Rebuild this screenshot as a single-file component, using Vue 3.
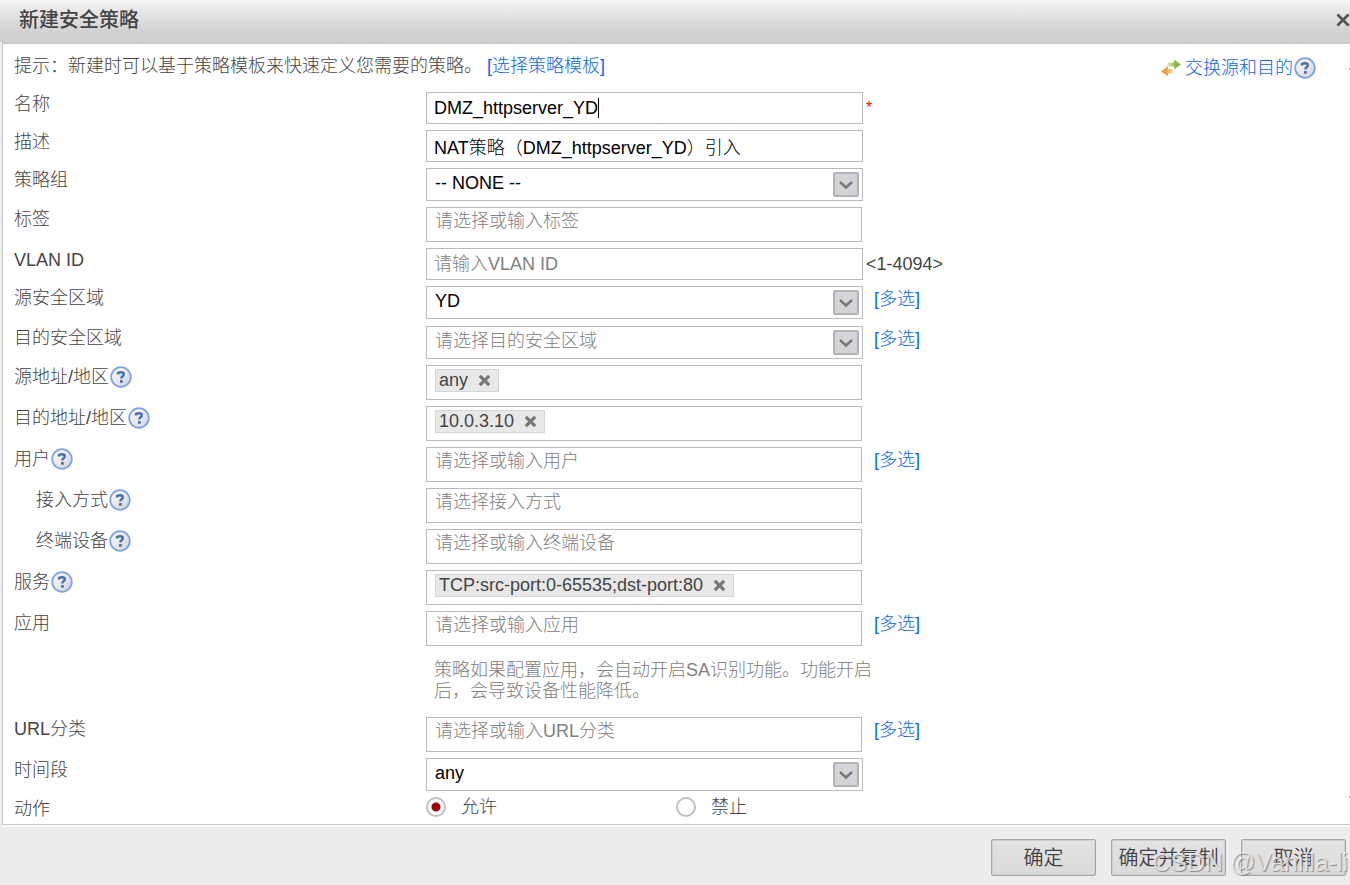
<script setup>
import { reactive } from 'vue'

const basicRows = reactive([
  { id: 'name', label: '名称', kind: 'text', value: 'DMZ_httpserver_YD', required: true, caret: true },
  { id: 'desc', label: '描述', kind: 'text', value: 'NAT策略（DMZ_httpserver_YD）引入' },
  { id: 'group', label: '策略组', kind: 'select', value: '-- NONE --' },
  { id: 'tag', label: '标签', kind: 'tags', tags: [], hint: '请选择或输入标签' },
  { id: 'vlan', label: 'VLAN ID', kind: 'text', value: '', hint: '请输入VLAN ID', range: '<1-4094>' },
  { id: 'src-zone', label: '源安全区域', kind: 'select', value: 'YD', multi: true }
])

const matchRows = reactive([
  { id: 'dst-zone', label: '目的安全区域', kind: 'select', value: '请选择目的安全区域', empty: true, multi: true },
  { id: 'src-addr', label: '源地址/地区', kind: 'tags', help: true, tags: ['any'] },
  { id: 'dst-addr', label: '目的地址/地区', kind: 'tags', help: true, tags: ['10.0.3.10'] },
  { id: 'user', label: '用户', kind: 'tags', help: true, tags: [], hint: '请选择或输入用户', multi: true },
  { id: 'access', label: '接入方式', kind: 'tags', help: true, sub: true, tags: [], hint: '请选择接入方式' },
  { id: 'device', label: '终端设备', kind: 'tags', help: true, sub: true, tags: [], hint: '请选择或输入终端设备' },
  { id: 'service', label: '服务', kind: 'tags', help: true, tags: ['TCP:src-port:0-65535;dst-port:80'] },
  { id: 'app', label: '应用', kind: 'tags', tags: [], hint: '请选择或输入应用', multi: true,
    note: '策略如果配置应用，会自动开启SA识别功能。功能开启后，会导致设备性能降低。' },
  { id: 'url', label: 'URL分类', kind: 'tags', tags: [], hint: '请选择或输入URL分类', multi: true },
  { id: 'time', label: '时间段', kind: 'select', value: 'any' }
])

const groups = [basicRows, matchRows]
const state = reactive({ action: 'permit' })
</script>

<template>
  <div class="dialog">
    <svg class="defs" width="0" height="0" aria-hidden="true">
      <defs>
        <linearGradient id="help-fill" x1="0" y1="0" x2="1" y2="1">
          <stop offset="0" stop-color="#ffffff" />
          <stop offset="0.5" stop-color="#e9e9ec" />
          <stop offset="1" stop-color="#cfd0d6" />
        </linearGradient>
        <linearGradient id="arrow-green" x1="0" y1="0" x2="1" y2="0">
          <stop offset="0" stop-color="#e3edcf" />
          <stop offset="0.6" stop-color="#8cb83c" />
        </linearGradient>
        <linearGradient id="arrow-orange" x1="1" y1="0" x2="0" y2="0">
          <stop offset="0" stop-color="#fbe3bd" />
          <stop offset="0.6" stop-color="#eda02c" />
        </linearGradient>
        <symbol id="help-icon" viewBox="0 0 22 22">
          <circle cx="11" cy="11" r="9.8" fill="url(#help-fill)" stroke="#7ba3e6" stroke-width="1.8" />
          <path d="M8 8.6V7Q9.2 6.2 11 6.2Q13.8 6.2 13.8 8.3Q13.8 9.7 12.2 10.5Q11.4 10.9 11.4 12.4" fill="none" stroke="#4570b2" stroke-width="2.4" />
          <rect x="10" y="14.1" width="2.8" height="2.6" fill="#4570b2" />
        </symbol>
      </defs>
    </svg>

    <header class="titlebar">
      <h1>新建安全策略</h1>
      <button type="button" class="close" aria-label="关闭">
        <svg width="14" height="14" viewBox="0 0 14 14"><path d="M2.2 2.2L11.8 11.8M11.8 2.2L2.2 11.8" stroke="#555" stroke-width="2.8" stroke-linecap="round" /></svg>
      </button>
    </header>

    <main class="content">
      <div class="tip">
        <p>提示：新建时可以基于策略模板来快速定义您需要的策略。 <a href="#">[选择策略模板]</a></p>
        <div class="swap">
          <svg width="22" height="20" viewBox="0 0 22 20">
            <path d="M7.5 4.5H14V1.5L21 6.5L14 11.5V8.5H7.5Z" fill="url(#arrow-green)" />
            <path d="M13 11H8V8L1 13.5L8 18.5V15.5H13Z" fill="url(#arrow-orange)" />
          </svg>
          <a href="#">交换源和目的</a>
          <svg class="help" width="22" height="22"><use href="#help-icon" /></svg>
        </div>
      </div>

      <div v-for="(rows, g) in groups" :key="g" class="group">
        <div v-for="row in rows" :key="row.id" class="row">
          <div class="label" :class="{ sub: row.sub }">
            <label :for="row.id">{{ row.label }}</label>
            <svg v-if="row.help" class="help" width="22" height="22"><use href="#help-icon" /></svg>
          </div>
          <div class="cell">
            <div v-if="row.kind === 'text'" class="field" :class="{ caret: row.caret }">
              <input :id="row.id" v-model="row.value" type="text" :placeholder="row.hint">
            </div>
            <div v-else-if="row.kind === 'select'" class="field">
              <select :id="row.id" v-model="row.value" :class="{ empty: row.empty }">
                <option :value="row.value">{{ row.value }}</option>
              </select>
              <span class="arrow">
                <svg width="14" height="10" viewBox="0 0 14 10"><path d="M1 2L7 7.5L13 2" fill="none" stroke="#777" stroke-width="2.4" /></svg>
              </span>
            </div>
            <div v-else class="tags">
              <span v-for="tag in row.tags" :key="tag" class="chip">
                {{ tag }}
                <button type="button" :aria-label="'移除 ' + tag">
                  <svg width="13" height="13" viewBox="0 0 13 13"><path d="M1.8 1.8L11.2 11.2M11.2 1.8L1.8 11.2" stroke="#777" stroke-width="3.2" /></svg>
                </button>
              </span>
              <input :id="row.id" type="text" :placeholder="row.hint">
            </div>
            <p v-if="row.note" class="note">{{ row.note }}</p>
          </div>
          <span v-if="row.required" class="required">*</span>
          <span v-if="row.range" class="range">{{ row.range }}</span>
          <a v-if="row.multi" class="multi" href="#">[多选]</a>
        </div>
      </div>

      <div class="row actions" role="radiogroup" aria-labelledby="action-label">
        <div class="label"><span id="action-label">动作</span></div>
        <label class="radio"><input v-model="state.action" type="radio" name="action" value="permit">允许</label>
        <label class="radio"><input v-model="state.action" type="radio" name="action" value="deny">禁止</label>
      </div>
      <div class="gutter" aria-hidden="true"></div>
    </main>

    <footer class="footer">
      <button type="button">确定</button>
      <button type="button" class="wide">确定并复制</button>
      <button type="button">取消</button>
      <span class="watermark">CSDN @Vanilla-li</span>
    </footer>
  </div>
</template>

<style>
body {
  margin: 0;
  background: #ededed;
}
</style>

<style scoped>
.dialog,
.dialog * {
  box-sizing: border-box;
}
.dialog {
  min-height: 100vh;
  display: flex;
  flex-direction: column;
  overflow: hidden;
  background: #ededed;
  color: #444;
  font-family: "Liberation Sans", "Noto Sans CJK SC", sans-serif;
  font-size: 18px;
  font-weight: 300;
  line-height: 24px;
}
.defs {
  position: absolute;
}
input,
select,
button {
  font: inherit;
  color: inherit;
  margin: 0;
}
p,
h1 {
  margin: 0;
}
a {
  color: #0a66ff;
  text-decoration: none;
}
svg {
  display: block;
  flex: none;
}
.titlebar {
  height: 42px;
  padding: 0 0 2px 19px;
  display: flex;
  align-items: center;
  justify-content: space-between;
  background: linear-gradient(#f4f4f4, #d2d2d2 75%, #d0d0d0);
}
.titlebar h1 {
  font-size: 20px;
  font-weight: 500;
}
.close {
  padding: 0;
  border: 0;
  background: none;
}
.content {
  position: relative;
  margin-left: 2px;
  padding: 10px 0 3px 11px;
  border: solid #c8c8c8;
  border-width: 2px 0 1px 1px;
  background: #fff;
}
.tip {
  display: flex;
  justify-content: space-between;
  padding-right: 34px;
  margin-bottom: 14px;
}
.swap {
  display: flex;
  align-items: center;
  padding-top: 2px;
  height: 26px;
  margin-bottom: -2px;
}
.swap a {
  margin-left: 3px;
}
.group {
  display: grid;
  gap: 6px;
  margin-bottom: 7px;
}
.row {
  display: flex;
  align-items: flex-start;
}
.actions {
  margin-top: -1px;
}
.label {
  width: 412px;
  height: 24px;
  display: flex;
  align-items: center;
}
.sub {
  padding-left: 22px;
}
.help {
  margin-left: 1px;
}
.cell {
  width: 437px;
}
.field {
  position: relative;
}
.field input,
.field select {
  display: block;
  width: 100%;
  height: 32px;
  padding: 0 7px;
  border: 1px solid #b9b9be;
  border-radius: 0;
  outline: 0;
  background: #fff;
  color: #000;
}
.field select {
  appearance: none;
  height: 33px;
  padding: 0 32px 3px 8px;
}
.field select.empty {
  color: #808080;
}
.caret::after {
  content: "";
  position: absolute;
  left: 172px;
  top: 6px;
  width: 1px;
  height: 20px;
  background: #000;
}
.arrow {
  position: absolute;
  right: 4px;
  top: 4px;
  width: 26px;
  height: 25px;
  display: flex;
  align-items: center;
  justify-content: center;
  border: 2px solid #b2b3b8;
  border-radius: 2px;
  background: #d3d4d6;
  pointer-events: none;
}
.tags {
  width: 436px;
  height: 35px;
  padding: 3px 8px 0;
  display: flex;
  align-items: flex-start;
  border: 1px solid #b9b9be;
}
.tags input {
  flex: 1;
  min-width: 0;
  height: 20px;
  padding: 0;
  border: 0;
  outline: 0;
  background: none;
}
input::placeholder {
  color: #808080;
  opacity: 1;
}
.chip {
  height: 23px;
  display: flex;
  align-items: center;
  gap: 10px;
  padding: 0 7px 0 3px;
  border: 1px solid #d6d6d6;
  background: #e8e8e8;
  line-height: 21px;
  white-space: nowrap;
}
.chip button {
  padding: 0;
  border: 0;
  background: none;
}
.note {
  padding: 14px 0 9px 8px;
  width: 450px;
  color: #808080;
  line-height: 21px;
}
.required {
  margin: 4px 0 0 3px;
  color: #f00;
  font-size: 16px;
}
.range {
  margin: 4px 0 0 3px;
}
.multi {
  margin: 1px 0 0 11px;
}
.radio {
  width: 250px;
  display: flex;
  align-items: center;
  gap: 15px;
  line-height: 20px;
}
.radio input {
  appearance: none;
  width: 20px;
  height: 20px;
  border: 2px solid #c0c0c0;
  border-radius: 50%;
  background: #fff;
}
.radio input:checked {
  background: radial-gradient(circle, #a00000 4px, #fff 5px);
}
.gutter {
  position: absolute;
  top: 3px;
  right: 0;
  bottom: 6px;
  width: 5px;
  background: #fbfbfb;
}
.gutter::before,
.gutter::after {
  content: "";
  position: absolute;
  right: 0;
  top: 21px;
  width: 1px;
  height: 2px;
  background: #999;
}
.gutter::after {
  top: auto;
  bottom: 20px;
}
.footer {
  position: relative;
  flex: 1;
  display: flex;
  align-items: flex-start;
  justify-content: flex-end;
  gap: 15px;
  padding: 12px 4px 9px;
  margin-left: 2px;
  border-top: 2px solid #f8f8f8;
}
.footer button {
  width: 105px;
  height: 37px;
  padding: 0;
  border: 1px solid #a5a5aa;
  border-radius: 2px;
  box-shadow: inset 0 0 0 1px #cfcfd2;
  background: linear-gradient(#e4e4e4, #dadada);
  font-size: 20px;
  font-weight: 350;
}
.footer .wide {
  width: 115px;
}
.watermark {
  position: absolute;
  right: 2px;
  top: 20px;
  color: rgba(240, 240, 240, 0.75);
  font-size: 25px;
  line-height: 30px;
  text-shadow: 1px 1px 1px rgba(110, 110, 110, 0.7);
  pointer-events: none;
}
</style>
